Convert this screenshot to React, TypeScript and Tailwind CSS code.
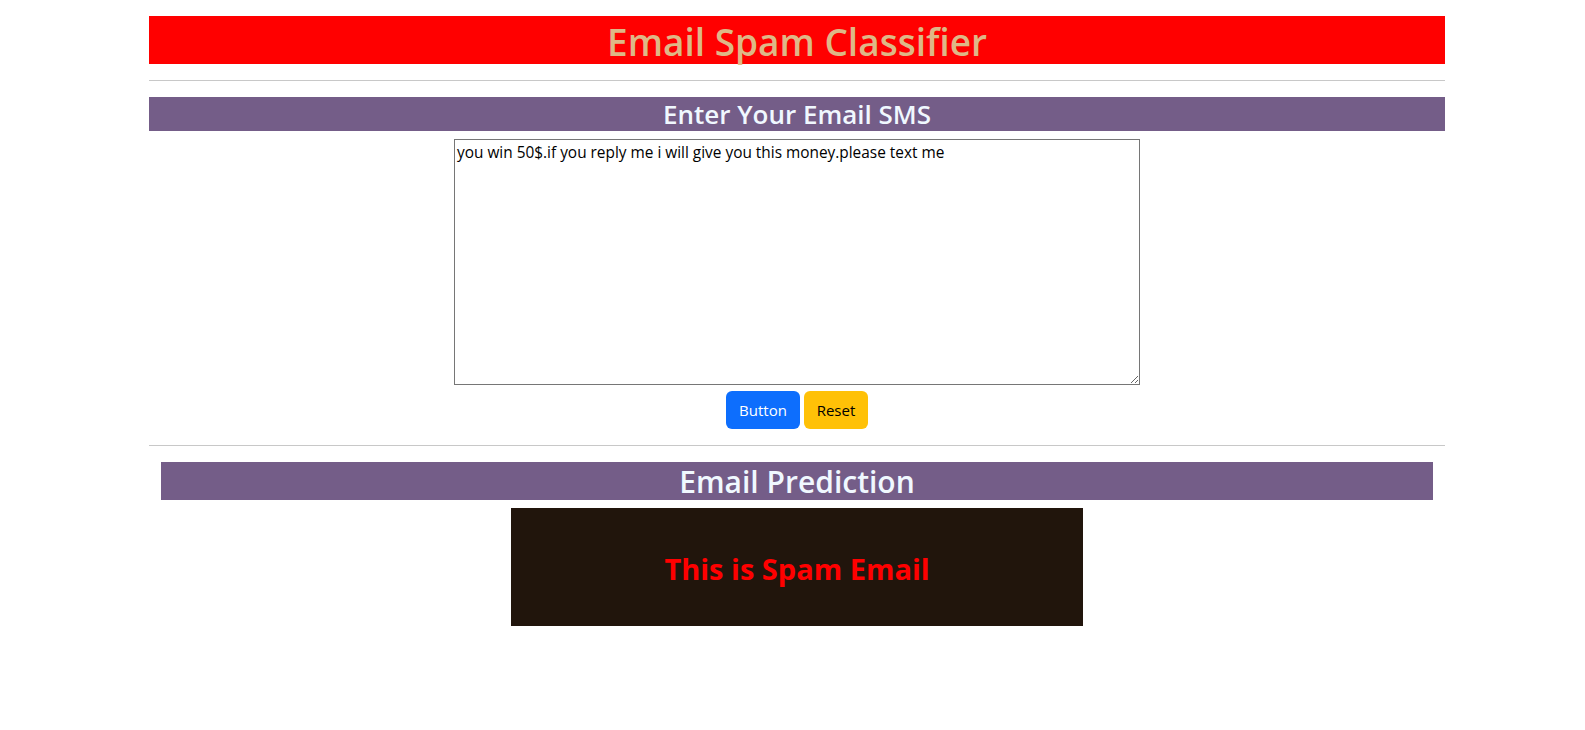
import { useState } from "react";

const font = { fontFamily: '"Open Sans", "Noto Sans", sans-serif' };

export default function App() {
  const [text, setText] = useState(
    "you win 50$.if you reply me i will give you this money.please text me"
  );

  return (
    <div className="min-h-screen bg-white font-['Open_Sans','Noto_Sans',sans-serif]">
      <div className="ml-[149px] w-[1296px] pt-4">
        <h1 className="h-12 bg-[#ff0000] pt-[3px] text-center text-[37px] font-semibold leading-[45px] text-[#deb887]">
          Email Spam Classifier
        </h1>
        <hr className="mt-4 border-t border-[#c8c8c8]" />

        <h3 className="mt-4 h-[34px] bg-[#745d88] pt-[1px] text-center text-[26px] font-semibold leading-[33px] text-[#f0f8ff]">
          Enter Your Email SMS
        </h3>

        <div className="flex flex-col items-center">
          <textarea
            value={text}
            onChange={(e) => setText(e.target.value)}
            style={font}
            className="mt-2 h-[246px] w-[686px] border border-[#767676] px-[2px] pt-[3px] text-[15.4px] leading-[20px] text-black"
          />
          <div className="mt-[6px] flex gap-1">
            <button className="h-[38px] w-[74px] rounded-md bg-[#0d6efd] text-[15px] text-white">
              Button
            </button>
            <button
              onClick={() => setText("")}
              className="h-[38px] w-[64px] rounded-md bg-[#ffc107] text-[15px] text-black"
            >
              Reset
            </button>
          </div>
        </div>

        <hr className="mt-4 border-t border-[#c8c8c8]" />

        <h2 className="mx-auto mt-4 h-[38px] w-[1272px] bg-[#745d88] pt-[1px] text-center text-[30px] font-semibold leading-[37px] text-[#f0f8ff]">
          Email Prediction
        </h2>

        <div className="mx-auto mt-2 flex h-[118px] w-[572px] items-center justify-center bg-[#21150c]">
          <h2 className="pt-[4px] text-[29px] font-bold text-[#ff0000]">
            This is Spam Email
          </h2>
        </div>
      </div>
    </div>
  );
}
